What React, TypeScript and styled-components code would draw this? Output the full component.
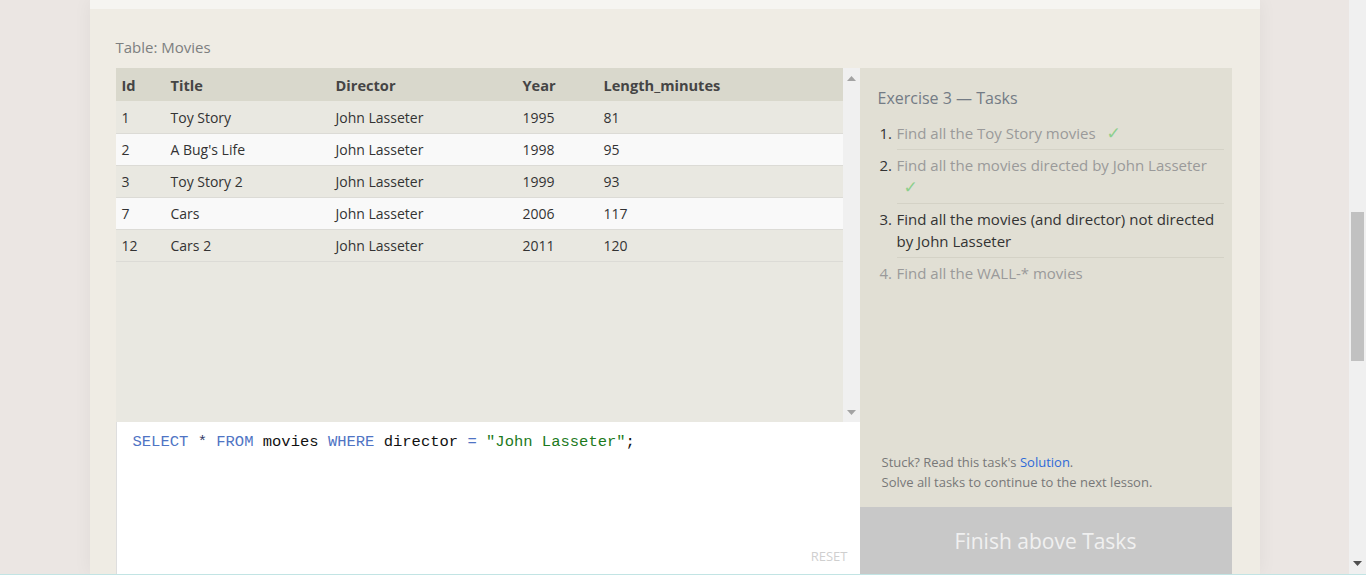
import React from "react";
import styled, { createGlobalStyle } from "styled-components";

const GlobalStyle = createGlobalStyle`
  html, body { margin: 0; padding: 0; height: 575px; overflow: hidden; }
  body { background: #ebe6e3; font-family: "Open Sans", "Noto Sans", sans-serif; }
  * { box-sizing: border-box; }
`;

const Frame = styled.div`
  display: flex;
  flex-direction: column;
  height: 575px;
  overflow: hidden;
`;

const Row = styled.div`
  display: flex;
  height: 574px;
  overflow: hidden;
`;

const BottomLine = styled.div`
  height: 1px;
  background: #c2e4e4;
`;

const Viewport = styled.div`
  flex: 1;
  display: flex;
  justify-content: center;
  background: #ebe6e3;
  overflow: hidden;
`;

const Main = styled.div`
  width: 1170px;
  flex-shrink: 0;
  background: #efece4;
  box-shadow: 0 0 18px rgba(0, 0, 0, 0.05);
  display: flex;
  flex-direction: column;
`;

const TopStrip = styled.div`
  height: 9px;
  flex-shrink: 0;
  background: #f6f5f1;
`;

const Section = styled.div`
  padding: 28px 28px 0 26px;
  display: flex;
  flex-direction: column;
`;

const Caption = styled.div`
  font-size: 15px;
  line-height: 20px;
  color: #7d7f80;
  margin-bottom: 11px;
`;

const Workspace = styled.div`
  display: flex;
`;

const LeftColumn = styled.div`
  width: 744px;
  display: flex;
  flex-direction: column;
`;

const TableWrap = styled.div`
  height: 354px;
  display: flex;
  background: #e9e8e1;
`;

const TableArea = styled.div`
  flex: 1;
  overflow: hidden;
`;

const Table = styled.table`
  width: 100%;
  border-collapse: collapse;
  table-layout: fixed;
  font-size: 14px;
  color: #333;
`;

const HeadCell = styled.th`
  height: 33px;
  padding: 0 6px;
  text-align: left;
  font-size: 14.6px;
  font-weight: 700;
  color: #454545;
  background: #d9d8cc;
`;

const BodyRow = styled.tr<{ $alt: boolean }>`
  background: ${(p) => (p.$alt ? "#f9f9f9" : "#e9e8e1")};
  border-bottom: 1px solid #dcdbd6;
`;

const Cell = styled.td`
  height: 32px;
  padding: 1px 6px 0;
  white-space: nowrap;
`;

const ScrollTrack = styled.div<{ $width: number }>`
  width: ${(p) => p.$width}px;
  flex-shrink: 0;
  background: #f0f0f0;
  display: flex;
  flex-direction: column;
  align-items: center;
`;

const ArrowBox = styled.div<{ $height: number }>`
  height: ${(p) => p.$height}px;
  display: flex;
  align-items: center;
  justify-content: center;
`;

const Filler = styled.div`
  flex: 1;
`;

const Thumb = styled.div`
  width: 13px;
  height: 149px;
  background: #c1c1c1;
  margin-top: 212px;
`;

const Editor = styled.div`
  height: 153px;
  background: #fff;
  border-left: 1px solid #dedede;
  padding: 10px 12px 11px 16px;
  display: flex;
  flex-direction: column;
`;

const Code = styled.div`
  font-family: "Liberation Mono", "DejaVu Sans Mono", monospace;
  font-size: 15.5px;
  line-height: 20px;
  color: #111;
  white-space: pre;
`;

const Tok = styled.span<{ $c: string }>`
  color: ${(p) => p.$c};
`;

const Reset = styled.div`
  margin-top: auto;
  align-self: flex-end;
  font-size: 13px;
  line-height: 16px;
  color: #cfcfcf;
`;

const Panel = styled.div`
  width: 372px;
  height: 507px;
  background: #e1dfd4;
  display: flex;
  flex-direction: column;
`;

const PanelBody = styled.div`
  flex: 1;
  padding: 19px 8px 0 18px;
  display: flex;
  flex-direction: column;
`;

const PanelTitle = styled.div`
  font-size: 16px;
  line-height: 22px;
  color: #737b85;
  margin-bottom: 9px;
`;

const TaskList = styled.ol`
  margin: 0;
  padding: 0;
  list-style: none;
`;

const Task = styled.li<{ $state: "done" | "active" | "todo" }>`
  display: flex;
  font-size: 15px;
  line-height: 22px;
  color: ${(p) => (p.$state === "active" ? "#333" : "#9a9a9a")};
`;

const TaskNum = styled.span<{ $dark: boolean }>`
  width: 19px;
  flex-shrink: 0;
  padding-top: 4px;
  padding-left: 2px;
  color: ${(p) => (p.$dark ? "#333" : "#9a9a9a")};
`;

const TaskText = styled.span<{ $last: boolean }>`
  flex: 1;
  padding: 4px 0 5px;
  border-bottom: ${(p) => (p.$last ? "none" : "1px solid #d4d2c6")};
`;

const Check = styled.span`
  display: inline-block;
  margin-left: 7px;
  line-height: 22px;
  vertical-align: top;
  color: #8dcf8d;
  font-family: "DejaVu Sans", sans-serif;
  font-size: 17px;
`;

const Hint = styled.div`
  margin-top: auto;
  margin-left: 4px;
  margin-bottom: 15px;
  font-size: 13px;
  line-height: 20px;
  color: #787878;
`;

const Link = styled.a`
  color: #2d6ad8;
  text-decoration: none;
`;

const FinishButton = styled.div`
  height: 68px;
  flex-shrink: 0;
  background: #c8c8c8;
  color: #f0f0f0;
  font-size: 21px;
  display: flex;
  align-items: center;
  justify-content: center;
`;

const TriUp = ({ color }: { color: string }) => (
  <svg width="9" height="5" viewBox="0 0 9 5">
    <polygon points="4.5,0 9,5 0,5" fill={color} />
  </svg>
);
const TriDown = ({ color }: { color: string }) => (
  <svg width="9" height="5" viewBox="0 0 9 5">
    <polygon points="0,0 9,0 4.5,5" fill={color} />
  </svg>
);

const rows = [
  ["1", "Toy Story", "John Lasseter", "1995", "81"],
  ["2", "A Bug's Life", "John Lasseter", "1998", "95"],
  ["3", "Toy Story 2", "John Lasseter", "1999", "93"],
  ["7", "Cars", "John Lasseter", "2006", "117"],
  ["12", "Cars 2", "John Lasseter", "2011", "120"],
];

const tasks: { text: string; state: "done" | "active" | "todo" }[] = [
  { text: "Find all the Toy Story movies", state: "done" },
  { text: "Find all the movies directed by John Lasseter", state: "done" },
  { text: "Find all the movies (and director) not directed by John Lasseter", state: "active" },
  { text: "Find all the WALL-* movies", state: "todo" },
];

export default function App() {
  return (
    <>
      <GlobalStyle />
      <Frame>
        <Row>
          <Viewport>
            <Main>
              <TopStrip />
              <Section>
                <Caption>Table: Movies</Caption>
                <Workspace>
                  <LeftColumn>
                    <TableWrap>
                      <TableArea>
                        <Table>
                          <colgroup>
                            <col style={{ width: 49 }} />
                            <col style={{ width: 165 }} />
                            <col style={{ width: 187 }} />
                            <col style={{ width: 81 }} />
                            <col />
                          </colgroup>
                          <thead>
                            <tr>
                              <HeadCell>Id</HeadCell>
                              <HeadCell>Title</HeadCell>
                              <HeadCell>Director</HeadCell>
                              <HeadCell>Year</HeadCell>
                              <HeadCell>Length_minutes</HeadCell>
                            </tr>
                          </thead>
                          <tbody>
                            {rows.map((r, i) => (
                              <BodyRow key={r[0]} $alt={i % 2 === 1}>
                                {r.map((c, j) => (
                                  <Cell key={j}>{c}</Cell>
                                ))}
                              </BodyRow>
                            ))}
                          </tbody>
                        </Table>
                      </TableArea>
                      <ScrollTrack $width={17}>
                        <ArrowBox $height={20}>
                          <TriUp color="#a3a3a3" />
                        </ArrowBox>
                        <Filler />
                        <ArrowBox $height={20}>
                          <TriDown color="#a3a3a3" />
                        </ArrowBox>
                      </ScrollTrack>
                    </TableWrap>
                    <Editor>
                      <Code>
                        <Tok $c="#4f74c4">SELECT</Tok> <Tok $c="#333a66">*</Tok>{" "}
                        <Tok $c="#4f74c4">FROM</Tok> movies <Tok $c="#4f74c4">WHERE</Tok> director{" "}
                        <Tok $c="#4f74c4">=</Tok> <Tok $c="#1c7a1c">"John Lasseter"</Tok>;
                      </Code>
                      <Reset>RESET</Reset>
                    </Editor>
                  </LeftColumn>
                  <Panel>
                    <PanelBody>
                      <PanelTitle>Exercise 3 — Tasks</PanelTitle>
                      <TaskList>
                        {tasks.map((t, i) => (
                          <Task key={i} $state={t.state}>
                            <TaskNum $dark={t.state !== "todo"}>{i + 1}.</TaskNum>
                            <TaskText $last={i === tasks.length - 1}>
                              {t.text}
                              {t.state === "done" && (
                                <>
                                  {" "}
                                  <Check>✓</Check>
                                </>
                              )}
                            </TaskText>
                          </Task>
                        ))}
                      </TaskList>
                      <Hint>
                        Stuck? Read this task's <Link href="#">Solution</Link>.
                        <br />
                        Solve all tasks to continue to the next lesson.
                      </Hint>
                    </PanelBody>
                    <FinishButton>Finish above Tasks</FinishButton>
                  </Panel>
                </Workspace>
              </Section>
            </Main>
          </Viewport>
          <ScrollTrack $width={17}>
            <Thumb />
            <Filler />
            <ArrowBox $height={22}>
              <TriDown color="#505050" />
            </ArrowBox>
          </ScrollTrack>
        </Row>
        <BottomLine />
      </Frame>
    </>
  );
}
